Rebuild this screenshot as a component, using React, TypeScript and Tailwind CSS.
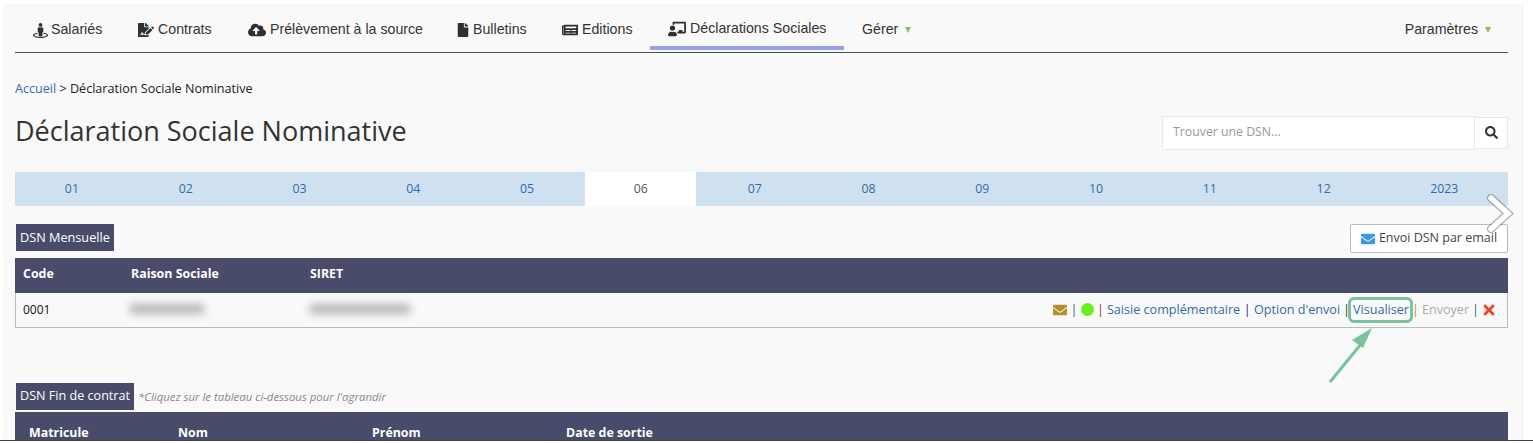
import React from 'react'
import {
  FaStreetView,
  FaFileSignature,
  FaCloudUploadAlt,
  FaFile,
  FaNewspaper,
  FaChalkboardTeacher,
  FaSearch,
  FaEnvelope,
  FaTimes,
} from 'react-icons/fa'

const navItems = [
  { label: 'Salariés', icon: FaStreetView, w: 'w-[105px]', size: 'mr-[3px] text-[15px]' },
  { label: 'Contrats', icon: FaFileSignature, w: 'w-[110px]', size: 'mr-[4px] text-[16px]' },
  { label: 'Prélèvement à la source', icon: FaCloudUploadAlt, w: 'w-[210px]', size: 'mr-[4px] text-[18px]' },
  { label: 'Bulletins', icon: FaFile, w: 'w-[104px]', size: '-ml-[2px] mr-[3px] text-[14px]' },
  { label: 'Editions', icon: FaNewspaper, w: 'w-[106px]', size: 'mr-[4px] text-[16px]' },
]

const months = ['01', '02', '03', '04', '05', '06', '07', '08', '09', '10', '11', '12']

const Caret = () => <span className="ml-[7px] inline-block h-0 w-0 border-x-[3px] border-t-[6px] border-x-transparent border-t-[#8cbb62]" />

const Sep = ({ color, tight }: { color: string; tight?: boolean }) => (
  <span style={{ color }} className={tight ? 'mx-[3px]' : 'mx-[3.5px]'}>|</span>
)

const App = () => {
  return (
    <div className="relative h-[443px] w-[1533px] overflow-hidden bg-white font-['Open_Sans',sans-serif] text-[13px] text-[#333]">
      <div className="absolute left-[3px] top-[4px] h-[436px] w-[1520px] border-r border-[#eeeeee] bg-[#f9f9f9]" />
      <div className="relative px-[15px] pr-[25px]">
        {/* menu */}
        <div className="flex h-[53px] items-stretch border-b border-[#4a4c6c] pt-[4px] font-['Liberation_Sans',sans-serif] text-[14.2px] text-[#333]">
          {navItems.map((item) => (
            <div key={item.label} className={`flex items-center pl-[18px] pt-[4px] ${item.w}`}>
              <item.icon className={`text-[#2f2f2f] ${item.size}`} />
              {item.label}
            </div>
          ))}
          <div className="mb-[2px] flex w-[194px] items-center border-b-[4px] border-[#9b9ff0] pl-[18px] pt-[8px]">
            <FaChalkboardTeacher className="mr-[4px] text-[18px] text-[#2f2f2f]" />
            Déclarations Sociales
          </div>
          <div className="ml-[18px] flex items-center pt-[4px]">
            Gérer
            <Caret />
          </div>
          <div className="ml-auto mr-[17px] flex items-center pt-[4px]">
            Paramètres
            <Caret />
          </div>
        </div>

        <div className="mt-[27px] text-[12.6px] leading-[18px] text-[#222]">
          <span className="text-[#336ba8]">Accueil</span> &gt; Déclaration Sociale Nominative
        </div>

        <div className="mt-[17px] flex h-[35px] items-center justify-between">
          <h1 className="mb-[2px] text-[27px] text-[#333]">Déclaration Sociale Nominative</h1>
          <div className="flex items-center">
            <div className="flex h-[34px] w-[313px] items-center border border-[#e8e8e8] bg-white pl-[10px] text-[12.3px] text-[#999]">
              Trouver une DSN...
            </div>
            <div className="flex h-[32px] w-[33px] items-center justify-center border border-l-0 border-[#e8e8e8] bg-white">
              <FaSearch className="text-[13px] text-[#333]" />
            </div>
          </div>
        </div>

        <div className="mt-[22px] flex h-[34px] bg-[#cfe0f0] text-[12.3px] text-[#336ba8]">
          {months.map((m) => (
            <div
              key={m}
              className={m === '06' ? 'mx-[1.4px] flex w-[111px] items-center justify-center bg-white text-[#555]' : 'flex w-[113.8px] items-center justify-center'}
            >
              {m}
            </div>
          ))}
          <div className="flex flex-1 items-center justify-center">2023</div>
        </div>

        <div className="mt-[18px] flex items-start justify-between">
          <div className="ml-[1px] flex h-[27px] items-center bg-[#484b6a] px-[4px] text-[12.7px] text-white">DSN Mensuelle</div>
          <div className="flex h-[29px] w-[158px] items-center justify-center rounded-[2px] border border-[#bbb] bg-white text-[12.5px] text-[#444]">
            <FaEnvelope className="mr-[4px] text-[14px] text-[#3f96e0]" />
            Envoi DSN par email
          </div>
        </div>

        <div className="mt-[5px] flex h-[35px] items-center bg-[#484b6a] pb-[3px] text-[12.4px] font-bold text-white">
          <div className="w-[116px] pl-[8px]">Code</div>
          <div className="w-[179px]">Raison Sociale</div>
          <div>SIRET</div>
        </div>
        <div className="flex h-[35px] items-center border-x border-b border-[#bbb] text-[12px] text-[#111]">
          <div className="w-[114px] pl-[7px]">0001</div>
          <div className="w-[180px]">
            <span className="inline-block h-[10px] w-[74px] bg-[#b5b5b5] blur-[4px]" />
          </div>
          <div>
            <span className="inline-block h-[10px] w-[100px] bg-[#b5b5b5] blur-[4px]" />
          </div>
          <div className="ml-auto flex items-center pr-[11px] text-[12.6px] text-[#336ba8]">
            <FaEnvelope className="text-[14px] text-[#b4902a]" />
            <Sep color="#2a5d8f" />
            <span className="h-[13px] w-[13px] rounded-full bg-[#66f01c]" />
            <Sep color="#7a3b1e" tight />
            <span>Saisie complémentaire</span>
            <Sep color="#3b1e6a" />
            <span>Option d'envoi</span>
            <Sep color="#333" tight />
            <span>Visualiser</span>
            <Sep color="#b4902a" tight />
            <span className="text-[#aaa]">Envoyer</span>
            <Sep color="#2a5d8f" tight />
            <FaTimes className="-mx-[1px] text-[16px] text-[#ee4527]" />
          </div>
        </div>

        <div className="mt-[55px] flex items-center">
          <div className="ml-[1px] flex h-[27px] items-center bg-[#484b6a] px-[4px] text-[12.6px] text-white">DSN Fin de contrat</div>
          <span className="ml-[4px] text-[11.4px] italic text-[#888]">*Cliquez sur le tableau ci-dessous pour l'agrandir</span>
        </div>
        <div className="mt-[2px] flex h-[28px] items-start bg-[#484b6a] pt-[12px] text-[12.4px] font-bold leading-[18px] text-white">
          <div className="w-[163px] pl-[14px]">Matricule</div>
          <div className="w-[194px]">Nom</div>
          <div className="w-[194px]">Prénom</div>
          <div>Date de sortie</div>
        </div>
      </div>

      <div className="absolute left-0 top-[440px] h-[3px] w-[1533px] border-t border-[#444] bg-white" />

      {/* annotations posées sur la capture */}
      <div className="absolute left-[1348px] top-[297px] h-[26px] w-[65px] rounded-[6px] border-[3px] border-[#7cc0a0]" />
      <svg className="absolute left-[1325px] top-[325px]" width="50" height="62" viewBox="0 0 50 62" fill="none">
        <path d="M5 57 L36 19" stroke="#7cc0a0" strokeWidth="3" />
        <path d="M47 3 L27 15 L38 23 Z" fill="#7cc0a0" />
      </svg>
      <svg className="absolute left-[1486px] top-[194px]" width="30" height="42" viewBox="0 0 30 42" fill="none">
        <path d="M5 4 L22 19.5 L5 35" stroke="#666" strokeWidth="8" strokeLinecap="round" opacity="0.5" />
        <path d="M5 4 L22 19.5 L5 35" stroke="#fff" strokeWidth="5.5" strokeLinecap="round" />
      </svg>
    </div>
  )
}

export default App
